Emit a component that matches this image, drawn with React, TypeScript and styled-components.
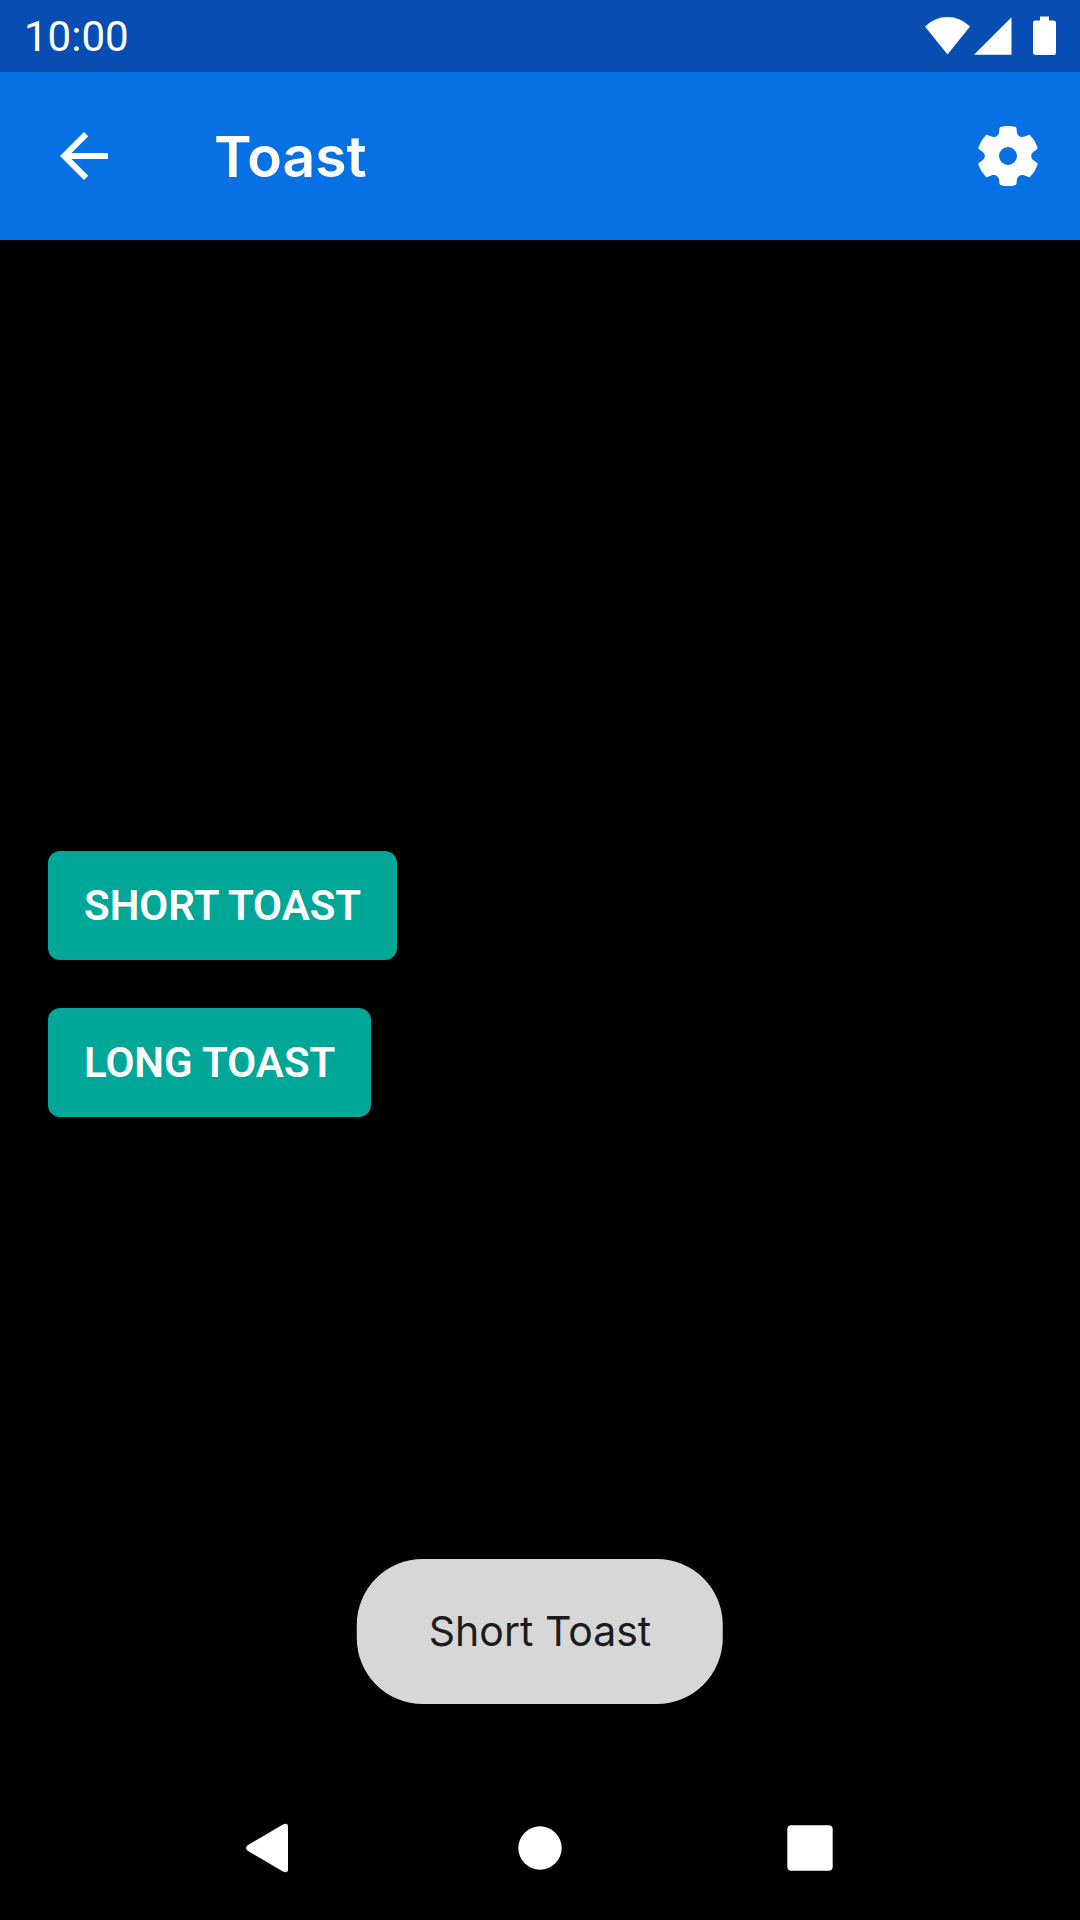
import React from 'react';
import styled, { createGlobalStyle } from 'styled-components';

const GlobalStyle = createGlobalStyle`
  *, *::before, *::after { box-sizing: border-box; }
  body { margin: 0; background: #000; }
  button { margin: 0; padding: 0; border: 0; background: none; color: inherit; font: inherit; cursor: pointer; }
  svg { display: block; fill: currentColor; }
`;

const Screen = styled.div`
  display: flex;
  flex-direction: column;
  min-height: 100vh;
  background: #000;
  color: #fff;
  font-family: Inter, 'Liberation Sans', sans-serif;
`;

const StatusBar = styled.div`
  display: flex;
  align-items: center;
  justify-content: space-between;
  height: 72px;
  padding: 0 24px;
  background: #084eb2;
`;

const Clock = styled.time`
  padding-top: 2px;
  font-family: Roboto, sans-serif;
  font-size: 42px;
  line-height: 48px;
`;

const StatusIcons = styled.div`
  display: flex;
  align-items: center;
`;

const AppBar = styled.header`
  display: flex;
  align-items: center;
  height: 168px;
  padding: 0 36px 0 48px;
  background: #0770e3;
`;

const IconButton = styled.button`
  display: block;
  width: 72px;
  height: 72px;
`;

const Title = styled.h1`
  flex: 1;
  margin: 0;
  padding: 2px 0 0 94px;
  font-size: 57px;
  line-height: 72px;
  font-weight: 600;
`;

const Content = styled.main`
  position: relative;
  flex: 1;
  display: flex;
  flex-direction: column;
  align-items: flex-start;
  justify-content: center;
  gap: 48px;
  padding: 0 48px 48px;
`;

const ActionButton = styled.button`
  && {
    padding: 30px 36px;
    border-radius: 12px;
    background: #00a698;
    font-family: Roboto, sans-serif;
    font-size: 42px;
    line-height: 49px;
    font-weight: 600;
    text-transform: uppercase;
  }
`;

const ToastMessage = styled.div`
  position: absolute;
  bottom: 72px;
  left: 50%;
  transform: translateX(-50%);
  padding: 48px 72px;
  border-radius: 66px;
  background: #d7d7d7;
  color: #1c1c1c;
  font-size: 41px;
  line-height: 49px;
  white-space: nowrap;
`;

const NavigationBar = styled.nav`
  display: grid;
  grid-template-columns: repeat(3, 1fr);
  justify-items: center;
  align-items: center;
  height: 144px;
  padding: 0 12.5%;
`;

type Point = [number, number];

const rotate = ([x, y]: Point, degrees: number): string => {
  const a = (degrees * Math.PI) / 180;
  const px = 12 + 1.025 * (x * Math.cos(a) - y * Math.sin(a));
  const py = 12 + x * Math.sin(a) + y * Math.cos(a);
  return `${px.toFixed(3)} ${py.toFixed(3)}`;
};

/* Six teeth, each followed by the rounded valley leading to the next one. */
const gearOutline = [0, 60, 120, 180, 240, 300]
  .map((angle, i) => {
    const p = (x: number, y: number) => rotate([x, y], angle);
    const next = (x: number, y: number) => rotate([x, y], angle + 60);
    return [
      `${i === 0 ? 'M' : 'L'}${p(-2.3, -9.75)}`,
      `A10 10 0 0 1 ${p(2.3, -9.75)}`,
      `Q${p(2.7, -9.65)} ${p(2.75, -9.3)}`,
      `L${p(2.9, -7.9)}`,
      `C${p(3.05, -6.65)} ${next(-3.05, -6.65)} ${next(-2.9, -7.9)}`,
      `L${next(-2.75, -9.3)}`,
      `Q${next(-2.7, -9.65)} ${next(-2.3, -9.75)}`,
    ].join('');
  })
  .join('');

const StatusGlyphs = () => (
  <svg width="132" height="40" viewBox="-0.5 0 132 40" aria-hidden="true">
    <path d="M0.5 10.5A31.5 31.5 0 0 1 45.5 10.5L23 38.5Z" />
    <path d="M49.5 38.8L87 1.3V38.8Z" />
    <path d="M115.5 0.4h9v4h4.5q2.5 0 2.5 2.5V36.500q0 2.500-2.500 2.500h-18q-2.500 0-2.500-2.500V6.900q0-2.500 2.500-2.500h4.500z" />
  </svg>
);

export default function App() {
  return (
    <Screen>
      <GlobalStyle />
      <StatusBar>
        <Clock>10:00</Clock>
        <StatusIcons>
          <StatusGlyphs />
        </StatusIcons>
      </StatusBar>
      <AppBar>
        <IconButton type="button" aria-label="Back">
          <svg width="72" height="72" viewBox="0 0 24 24">
            <path d="M20 11H7.830l5.590-5.590L12 4l-8 8 8 8 1.410-1.410L7.830 13H20v-2z" />
          </svg>
        </IconButton>
        <Title>Toast</Title>
        <IconButton type="button" aria-label="Settings">
          <svg width="72" height="72" viewBox="0 0 24 24">
            <path fillRule="evenodd" d={`${gearOutline}ZM9 12a3 3 0 1 0 6 0a3 3 0 1 0-6 0Z`} />
          </svg>
        </IconButton>
      </AppBar>
      <Content>
        <ActionButton type="button">Short Toast</ActionButton>
        <ActionButton type="button">Long Toast</ActionButton>
        <ToastMessage role="status">Short Toast</ToastMessage>
      </Content>
      <NavigationBar aria-label="System">
        <IconButton type="button" aria-label="Back">
          <svg width="72" height="72" viewBox="0 0 72 72">
            <path d="M49 12.500Q54 10 54 15V57Q54 62 49 59.500L14 39Q10 36 14 33Z" />
          </svg>
        </IconButton>
        <IconButton type="button" aria-label="Home">
          <svg width="72" height="72" viewBox="0 0 72 72">
            <circle cx="36" cy="36" r="21.700" />
          </svg>
        </IconButton>
        <IconButton type="button" aria-label="Recent apps">
          <svg width="72" height="72" viewBox="0 0 72 72">
            <rect x="13.300" y="13.300" width="45.400" height="45.400" rx="4" />
          </svg>
        </IconButton>
      </NavigationBar>
    </Screen>
  );
}
